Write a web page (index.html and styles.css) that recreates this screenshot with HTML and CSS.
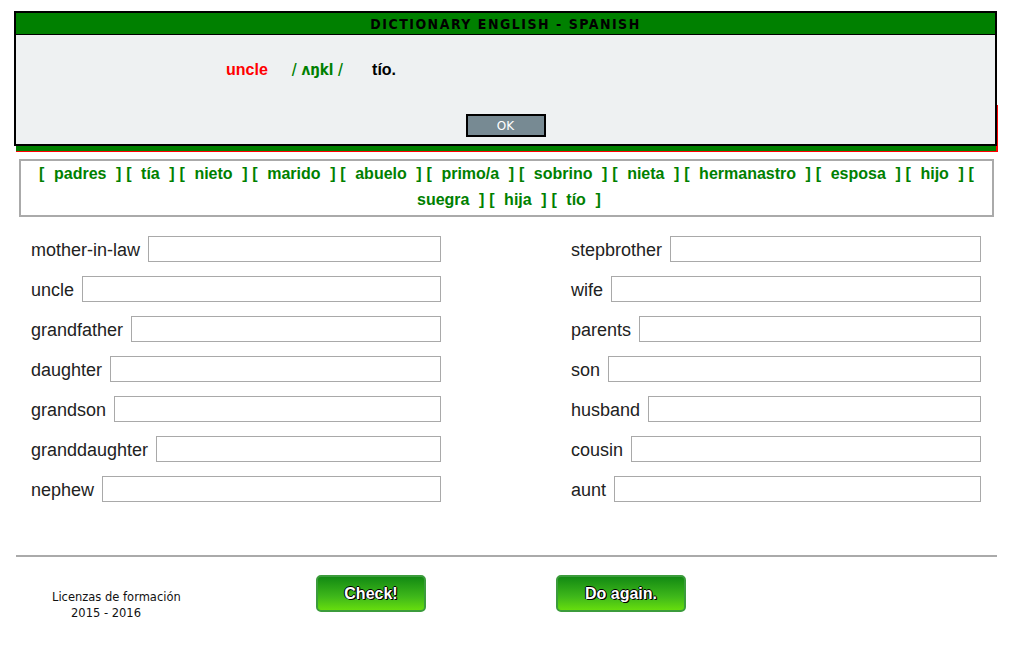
FILE: index.html
```html
<!DOCTYPE html>
<html>
<head>
<meta charset="utf-8">
<link rel="stylesheet" href="styles.css">
</head>
<body>
<div class="page">
  <div class="topbar"></div>

  <div class="words">[&nbsp; padres &nbsp;] [&nbsp; tía &nbsp;] [&nbsp; nieto &nbsp;] [&nbsp; marido &nbsp;] [&nbsp; abuelo &nbsp;] [&nbsp; primo/a &nbsp;] [&nbsp; sobrino &nbsp;] [&nbsp; nieta &nbsp;] [&nbsp; hermanastro &nbsp;] [&nbsp; esposa &nbsp;] [&nbsp; hijo &nbsp;] [ &nbsp;suegra &nbsp;] [&nbsp; hija &nbsp;] [&nbsp; tío &nbsp;]</div>

  <div class="quiz">
    <div class="col">
      <div class="row"><span class="lbl">mother-in-law</span><input class="inp" type="text"></div>
      <div class="row"><span class="lbl">uncle</span><input class="inp" type="text"></div>
      <div class="row"><span class="lbl">grandfather</span><input class="inp" type="text"></div>
      <div class="row"><span class="lbl">daughter</span><input class="inp" type="text"></div>
      <div class="row"><span class="lbl">grandson</span><input class="inp" type="text"></div>
      <div class="row"><span class="lbl">granddaughter</span><input class="inp" type="text"></div>
      <div class="row"><span class="lbl">nephew</span><input class="inp" type="text"></div>
    </div>
    <div class="col">
      <div class="row"><span class="lbl">stepbrother</span><input class="inp" type="text"></div>
      <div class="row"><span class="lbl">wife</span><input class="inp" type="text"></div>
      <div class="row"><span class="lbl">parents</span><input class="inp" type="text"></div>
      <div class="row"><span class="lbl">son</span><input class="inp" type="text"></div>
      <div class="row"><span class="lbl">husband</span><input class="inp" type="text"></div>
      <div class="row"><span class="lbl">cousin</span><input class="inp" type="text"></div>
      <div class="row"><span class="lbl">aunt</span><input class="inp" type="text"></div>
    </div>
  </div>

  <div class="rule"></div>

  <div class="footer">
    <div class="credits">
      <div>Licenzas de formación</div>
      <div class="year">2015 - 2016</div>
    </div>
    <button class="gbtn check">Check!</button>
    <button class="gbtn again">Do again.</button>
  </div>
</div>

<div class="dialog">
  <div class="dlg-head">DICTIONARY ENGLISH - SPANISH</div>
  <div class="dlg-body">
    <div class="entry">
      <span class="en">uncle</span>
      <span class="ph">/ ʌŋkl /</span>
      <span class="es">tío.</span>
    </div>
    <div class="dlg-actions"><button class="ok">OK</button></div>
  </div>
</div>
</body>
</html>
```

FILE: styles.css
```css
html, body {
  margin: 0;
  padding: 0;
  background: #ffffff;
  font-family: "Liberation Sans", Arial, sans-serif;
}

.page {
  width: 1021px;
  padding-top: 1px;
}

.topbar {
  margin: 104px 0 0 16px;
  width: 982px;
  height: 47px;
  box-sizing: border-box;
  background: #008000;
  border-right: 2px solid #ff0000;
  border-bottom: 1px solid #ff0000;
}

.words {
  margin: 7px 0 0 19px;
  width: 975px;
  box-sizing: border-box;
  border: 2px solid #aaaaaa;
  padding: 0 10px 2px;
  text-align: center;
  font-weight: bold;
  font-size: 16px;
  word-spacing: 0.35px;
  line-height: 26px;
  color: #008000;
}

.quiz {
  display: grid;
  grid-template-columns: 410px 410px;
  column-gap: 130px;
  margin: 19px 0 0 31px;
}

.col {
  display: flex;
  flex-direction: column;
  gap: 14px;
}

.row {
  display: flex;
  align-items: center;
  gap: 8px;
  height: 26px;
}

.lbl {
  font-size: 18px;
  line-height: 26px;
  padding-top: 2px;
  color: #222222;
  white-space: nowrap;
}

.inp {
  flex: 1;
  min-width: 0;
  height: 26px;
  box-sizing: border-box;
  border: 1px solid #a9a9a9;
  margin: 0;
  padding: 2px 4px;
  background: #fff;
  font-size: 16px;
}

.rule {
  margin: 53px 0 0 16px;
  width: 981px;
  height: 2px;
  background: #aaaaaa;
}

.footer {
  display: flex;
  align-items: flex-start;
  padding-top: 18px;
}

.credits {
  margin: 14px 0 0 52px;
  width: 134px;
  font-family: "DejaVu Sans", sans-serif;
  font-size: 11.5px;
  line-height: 16px;
  color: #111;
}

.year {
  padding-left: 19px;
}

.gbtn {
  height: 37px;
  box-sizing: border-box;
  border: 2px solid #3c9c3c;
  border-radius: 5px;
  background: linear-gradient(#138a13, #3fb81a 60%, #66dd0e);
  color: #ffffff;
  font-family: "Liberation Sans", Arial, sans-serif;
  font-weight: bold;
  font-size: 16px;
  text-shadow: 1px 1px 0 #000, -1px 0 0 #000, 0 -1px 0 #000, 1px 0 0 #000;
  padding: 0;
  cursor: pointer;
}

.check {
  width: 110px;
  margin-left: 130px;
}

.again {
  width: 130px;
  margin-left: 130px;
}

/* Dialog overlay */
.dialog {
  position: absolute;
  top: 11px;
  left: 14px;
  width: 983px;
  height: 135px;
  box-sizing: border-box;
  border: 2px solid #000000;
  background: #eef1f2;
  display: flex;
  flex-direction: column;
}

.dlg-head {
  height: 21px;
  background: #008000;
  border-bottom: 1px solid #000;
  text-align: center;
  font-family: "DejaVu Sans Condensed", "DejaVu Sans", sans-serif;
  font-weight: bold;
  font-size: 14px;
  letter-spacing: 1.5px;
  line-height: 22px;
  color: #000;
}

.dlg-body {
  flex: 1;
  display: flex;
  flex-direction: column;
}

.entry {
  display: flex;
  align-items: center;
  height: 24px;
  margin-top: 23px;
  padding-left: 210px;
  font-weight: bold;
  font-size: 16px;
}

.en {
  color: #ff0000;
  margin-right: 24px;
}

.ph {
  color: #008000;
  margin-right: 29px;
  font-family: "DejaVu Sans Condensed", "Liberation Sans", sans-serif;
  font-size: 15px;
}

.es {
  color: #000;
}

.dlg-actions {
  display: flex;
  justify-content: center;
  margin-top: 32px;
}

.ok {
  width: 80px;
  height: 23px;
  box-sizing: border-box;
  border: 2px solid #000;
  background: #778a93;
  color: #fff;
  font-family: "DejaVu Sans", sans-serif;
  font-size: 12px;
  padding: 0;
}
```
